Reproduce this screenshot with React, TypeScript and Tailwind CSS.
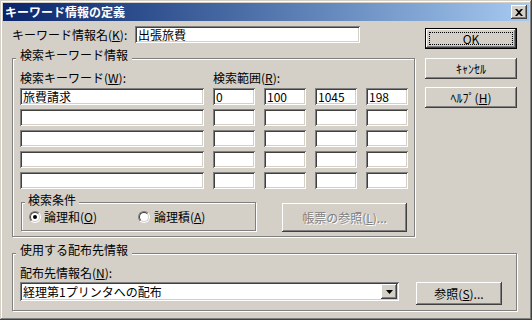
import React from "react";

const FIELD =
  "bg-white shadow-[inset_1px_1px_0_#808080,inset_-1px_-1px_0_#ffffff,inset_2px_2px_0_#404040,inset_-2px_-2px_0_#d4d0c8]";
const RAISED =
  "bg-[#d4d0c8] shadow-[inset_-1px_-1px_0_#404040,inset_1px_1px_0_#ffffff,inset_-2px_-2px_0_#808080,inset_2px_2px_0_#d4d0c8]";
const GROUP =
  "relative border border-[#808080] shadow-[inset_1px_1px_0_#ffffff,1px_1px_0_#ffffff]";

function U({ children }: { children: React.ReactNode }) {
  return <span className="underline underline-offset-[1px]">{children}</span>;
}

function Field({ w, text }: { w: string; text?: string }) {
  return (
    <div className={`${FIELD} ${w} h-[17px] flex items-center pl-[3px] leading-[14px] overflow-hidden whitespace-nowrap`}>
      {text}
    </div>
  );
}

function Radio({ checked }: { checked?: boolean }) {
  return (
    <div className="w-[12px] h-[12px] rounded-full border border-t-[#808080] border-l-[#808080] border-b-white border-r-white">
      <div className="w-full h-full rounded-full border border-t-[#404040] border-l-[#404040] border-b-[#d4d0c8] border-r-[#d4d0c8] bg-white flex items-center justify-center">
        {checked && <div className="w-[4px] h-[4px] rounded-full bg-black" />}
      </div>
    </div>
  );
}

const rows: string[][] = [
  ["旅費請求", "0", "100", "1045", "198"],
  ["", "", "", "", ""],
  ["", "", "", "", ""],
  ["", "", "", "", ""],
  ["", "", "", "", ""],
];

export default function App() {
  return (
    <div className="w-[532px] h-[320px] bg-[#d4d0c8] p-[3px] font-['Noto_Sans_CJK_JP',sans-serif] text-[12px] leading-[14px] text-black shadow-[inset_-1px_-1px_0_#404040,inset_1px_1px_0_#d4d0c8,inset_-2px_-2px_0_#808080,inset_2px_2px_0_#ffffff] overflow-hidden">
      {/* Title bar */}
      <div className="h-[18px] flex items-center justify-between bg-linear-to-r from-[#0a246a] to-[#a6caf0] pl-[2px] pr-[2px]">
        <span className="text-white font-bold text-[12px] leading-[14px]">キーワード情報の定義</span>
        <div className={`${RAISED} w-[16px] h-[14px] flex items-center justify-center`}>
          <svg width="8" height="7" viewBox="0 0 8 7">
            <path d="M0 0h2l2 2 2-2h2L5 3.5 8 7H6L4 5 2 7H0l3-3.5z" fill="#000" />
          </svg>
        </div>
      </div>

      {/* Body */}
      <div className="pl-[9px] pr-[12px]">
        <div className="flex">
          {/* Left column */}
          <div className="w-[403px]">
            <div className="mt-[5px] flex items-center h-[17px]">
              <span className="w-[123px]">
                キーワード情報名(<U>K</U>):
              </span>
              <div className={`${FIELD} w-[225px] h-[17px] flex items-center pl-[3px]`}>出張旅費</div>
            </div>

            <div className={`${GROUP} mt-[15px] h-[179px]`}>
              <span className="absolute -top-[11px] left-[3px] bg-[#d4d0c8] px-[4px]">検索キーワード情報</span>
              <div className="pl-[7px] pt-[12px]">
                <div className="grid grid-cols-[184px_42px_42px_42px_42px] gap-x-[9px]">
                  <span>
                    検索キーワード(<U>W</U>):
                  </span>
                  <span className="col-span-4">
                    検索範囲(<U>R</U>):
                  </span>
                </div>
                <div className="mt-[3px] grid grid-cols-[184px_42px_42px_42px_42px] gap-x-[9px] gap-y-[4px]">
                  {rows.map((r, i) =>
                    r.map((c, j) => <Field key={`${i}-${j}`} w="w-full" text={c} />)
                  )}
                </div>
                <div className="mt-[13px] flex items-start">
                  <div className={`${GROUP} ml-[1px] w-[235px] h-[29px]`}>
                    <span className="absolute -top-[10px] left-[3px] bg-[#d4d0c8] px-[3px]">検索条件</span>
                    <div className="h-full flex items-center pl-[7px]">
                      <div className="w-[109px] flex items-center gap-[3px]">
                        <Radio checked />
                        <span>
                          論理和(<U>O</U>)
                        </span>
                      </div>
                      <div className="flex items-center gap-[4px]">
                        <Radio />
                        <span>
                          論理積(<U>A</U>)
                        </span>
                      </div>
                    </div>
                  </div>
                  <div
                    className={`${RAISED} ml-[26px] mt-[1px] w-[125px] h-[29px] flex items-center justify-center text-[#808080] [text-shadow:1px_1px_0_#ffffff]`}
                  >
                    帳票の参照(<U>L</U>)...
                  </div>
                </div>
              </div>
            </div>
          </div>

          {/* Right column */}
          <div className="ml-[10px] w-[92px] flex flex-col">
            <div className="mt-[7px] h-[21px] border border-black">
              <div className={`${RAISED} h-full p-[3px]`}>
                <div className="h-full border border-dotted border-black flex items-center justify-center">OK</div>
              </div>
            </div>
            <div className={`${RAISED} mt-[9px] h-[21px] flex items-center justify-center`}>ｷｬﾝｾﾙ</div>
            <div className={`${RAISED} mt-[8px] h-[21px] flex items-center justify-center`}>
              ﾍﾙﾌﾟ(<U>H</U>)
            </div>
          </div>
        </div>

        {/* Bottom group */}
        <div className={`${GROUP} mt-[16px] w-[505px] h-[58px]`}>
          <span className="absolute -top-[11px] left-[3px] bg-[#d4d0c8] px-[4px]">使用する配布先情報</span>
          <div className="pl-[7px] pt-[12px]">
            <div>
              配布先情報名(<U>N</U>):
            </div>
            <div className="mt-[2px] flex items-start">
              <div className={`${FIELD} w-[379px] h-[19px] flex items-center justify-between pl-[3px] pr-[2px]`}>
                <span>経理第1プリンタへの配布</span>
                <div className={`${RAISED} w-[16px] h-[15px] flex items-center justify-center`}>
                  <svg width="7" height="4" viewBox="0 0 7 4">
                    <path d="M0 0h7L3.5 4z" fill="#000" />
                  </svg>
                </div>
              </div>
              <div className={`${RAISED} ml-[17px] w-[86px] h-[23px] flex items-center justify-center`}>
                参照(<U>S</U>)...
              </div>
            </div>
          </div>
        </div>
      </div>
    </div>
  );
}
